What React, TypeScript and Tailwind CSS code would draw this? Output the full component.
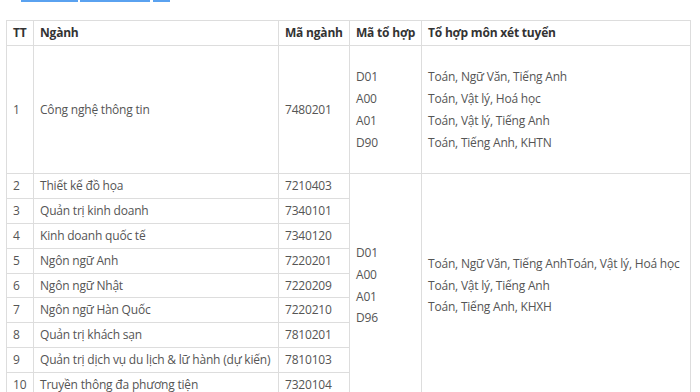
import React from "react";

const rows = [
  ["2", "Thiết kế đồ họa", "7210403"],
  ["3", "Quản trị kinh doanh", "7340101"],
  ["4", "Kinh doanh quốc tế", "7340120"],
  ["5", "Ngôn ngữ Anh", "7220201"],
  ["6", "Ngôn ngữ Nhật", "7220209"],
  ["7", "Ngôn ngữ Hàn Quốc", "7220210"],
  ["8", "Quản trị khách sạn", "7810201"],
  ["9", "Quản trị dịch vụ du lịch & lữ hành (dự kiến)", "7810103"],
  ["10", "Truyền thông đa phương tiện", "7320104"],
];

const cell = "border border-[#dddddd] px-[6px] py-0 align-middle whitespace-nowrap overflow-hidden";

export default function App() {
  return (
    <div
      className="w-[700px] h-[392px] overflow-hidden bg-white text-[12px] tracking-[-0.2px] text-[#555555]"
      style={{ fontFamily: '"Open Sans", "Noto Sans", sans-serif' }}
    >
      <div className="flex h-[2px]">
        <div className="ml-[21px] w-[57px] bg-[#5aa2f0]" />
        <div className="ml-[2px] w-[70px] bg-[#5aa2f0]" />
        <div className="ml-[3px] w-[17px] bg-[#5aa2f0]" />
      </div>
      <table className="ml-[6px] mt-[18px] border-collapse table-fixed w-[684px]">
        <colgroup>
          <col className="w-[27px]" />
          <col className="w-[245px]" />
          <col className="w-[71px]" />
          <col className="w-[72px]" />
          <col className="w-[269px]" />
        </colgroup>
        <thead>
          <tr className="h-[25px] text-[#333333] font-bold">
            <th className={`${cell} text-left`}>TT</th>
            <th className={`${cell} text-left`}>Ngành</th>
            <th className={`${cell} text-left`}>Mã ngành</th>
            <th className={`${cell} text-left`}>Mã tổ hợp</th>
            <th className={`${cell} text-left`}>Tổ hợp môn xét tuyển</th>
          </tr>
        </thead>
        <tbody>
          <tr className="h-[128px]">
            <td className={cell}>1</td>
            <td className={cell}>Công nghệ thông tin</td>
            <td className={cell}>7480201</td>
            <td className={`${cell} leading-[22px]`}>
              <div>D01</div>
              <div>A00</div>
              <div>A01</div>
              <div>D90</div>
            </td>
            <td className={`${cell} leading-[22px]`}>
              <div>Toán, Ngữ Văn, Tiếng Anh</div>
              <div>Toán, Vật lý, Hoá học</div>
              <div>Toán, Vật lý, Tiếng Anh</div>
              <div>Toán, Tiếng Anh, KHTN</div>
            </td>
          </tr>
          {rows.map((r, i) => (
            <tr key={r[0]} className="h-[24.9px]">
              <td className={cell}>{r[0]}</td>
              <td className={cell}>{r[1]}</td>
              <td className={cell}>{r[2]}</td>
              {i === 0 && (
                <>
                  <td rowSpan={9} className={`${cell} leading-[21.7px]`}>
                    <div>D01</div>
                    <div>A00</div>
                    <div>A01</div>
                    <div>D96</div>
                  </td>
                  <td rowSpan={9} className={`${cell} leading-[21.7px]`}>
                    <div>Toán, Ngữ Văn, Tiếng AnhToán, Vật lý, Hoá học</div>
                    <div>Toán, Vật lý, Tiếng Anh</div>
                    <div>Toán, Tiếng Anh, KHXH</div>
                  </td>
                </>
              )}
            </tr>
          ))}
        </tbody>
      </table>
    </div>
  );
}
